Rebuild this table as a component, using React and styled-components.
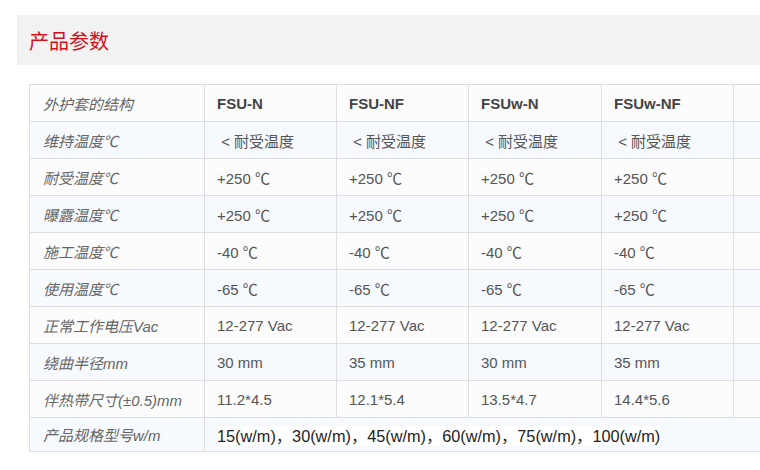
import React from "react";
import styled, { createGlobalStyle } from "styled-components";

const Global = createGlobalStyle`
  html, body { margin: 0; padding: 0; background: #fff; overflow: hidden; }
  body { font-family: "Liberation Sans", Arial, "Noto Sans CJK SC", sans-serif; }
`;

const Page = styled.div`
  width: 760px;
  height: 470px;
  overflow: hidden;
  padding: 15px 0 0 17px;
  box-sizing: border-box;
`;

const TitleBar = styled.div`
  height: 50px;
  width: 900px;
  background: #f2f2f2;
  display: flex;
  align-items: center;
  padding-left: 12px;
  box-sizing: border-box;
`;

const Title = styled.h2`
  margin: 0;
  font-weight: normal;
  font-size: 20px;
  color: #d3101c;
  font-family: "Noto Sans CJK SC", sans-serif;
`;

const TableWrap = styled.div`
  padding: 19px 0 0 12px;
`;

const Table = styled.table`
  border-collapse: collapse;
  table-layout: fixed;
  width: 880px;
  font-size: 15px;
`;

const Row = styled.tr`
  background: ${(p) => (p.$alt ? "#f6f9fe" : "#fcfcfc")};
  height: ${(p) => (p.$short ? 34 : 37)}px;
`;

const LabelCell = styled.td`
  border: 1px solid #dedede;
  padding: 0 0 0 13px;
  color: #666;
  font-style: italic;
  font-family: "Liberation Sans", "Noto Sans CJK SC", sans-serif;
  white-space: nowrap;
`;

const Cell = styled.td`
  border: 1px solid #dedede;
  padding: 0 0 0 12px;
  font-weight: ${(p) => (p.$head ? "bold" : "normal")};
  color: ${(p) => (p.$head ? "#444" : "#555")};
  font-family: "Liberation Sans", "Noto Sans CJK SC", sans-serif;
  white-space: nowrap;
`;

const Models = styled.span`
  background: #fff;
  color: #222;
  font-size: 16.3px;
  padding: 1px 0;
  font-family: "Liberation Sans", "Noto Sans CJK SC", sans-serif;
`;

const LT = "\u00a0<\u00a0耐受温度";
const heads = ["FSU-N", "FSU-NF", "FSUw-N", "FSUw-NF"];
const rows = [
  ["维持温度℃", [LT, LT, LT, LT]],
  ["耐受温度℃", ["+250 ℃", "+250 ℃", "+250 ℃", "+250 ℃"]],
  ["曝露温度℃", ["+250 ℃", "+250 ℃", "+250 ℃", "+250 ℃"]],
  ["施工温度℃", ["-40 ℃", "-40 ℃", "-40 ℃", "-40 ℃"]],
  ["使用温度℃", ["-65 ℃", "-65 ℃", "-65 ℃", "-65 ℃"]],
  ["正常工作电压Vac", ["12-277 Vac", "12-277 Vac", "12-277 Vac", "12-277 Vac"]],
  ["绕曲半径mm", ["30 mm", "35 mm", "30 mm", "35 mm"]],
  ["伴热带尺寸(±0.5)mm", ["11.2*4.5", "12.1*5.4", "13.5*4.7", "14.4*5.6"]],
];

export default function App() {
  return (
    <Page>
      <Global />
      <TitleBar>
        <Title>产品参数</Title>
      </TitleBar>
      <TableWrap>
        <Table>
          <colgroup>
            <col style={{ width: 175 }} />
            <col style={{ width: 132 }} />
            <col style={{ width: 132 }} />
            <col style={{ width: 133 }} />
            <col style={{ width: 132 }} />
            <col style={{ width: 176 }} />
          </colgroup>
          <tbody>
            <Row>
              <LabelCell>外护套的结构</LabelCell>
              {heads.map((h) => (
                <Cell key={h} $head>{h}</Cell>
              ))}
              <Cell />
            </Row>
            {rows.map(([label, vals], i) => (
              <Row key={label} $alt={i % 2 === 0}>
                <LabelCell>{label}</LabelCell>
                {vals.map((v, j) => (
                  <Cell key={j}>{v}</Cell>
                ))}
                <Cell />
              </Row>
            ))}
            <Row $alt $short>
              <LabelCell>产品规格型号w/m</LabelCell>
              <Cell colSpan={5}>
                <Models>15(w/m)，30(w/m)，45(w/m)，60(w/m)，75(w/m)，100(w/m)</Models>
              </Cell>
            </Row>
          </tbody>
        </Table>
      </TableWrap>
    </Page>
  );
}
